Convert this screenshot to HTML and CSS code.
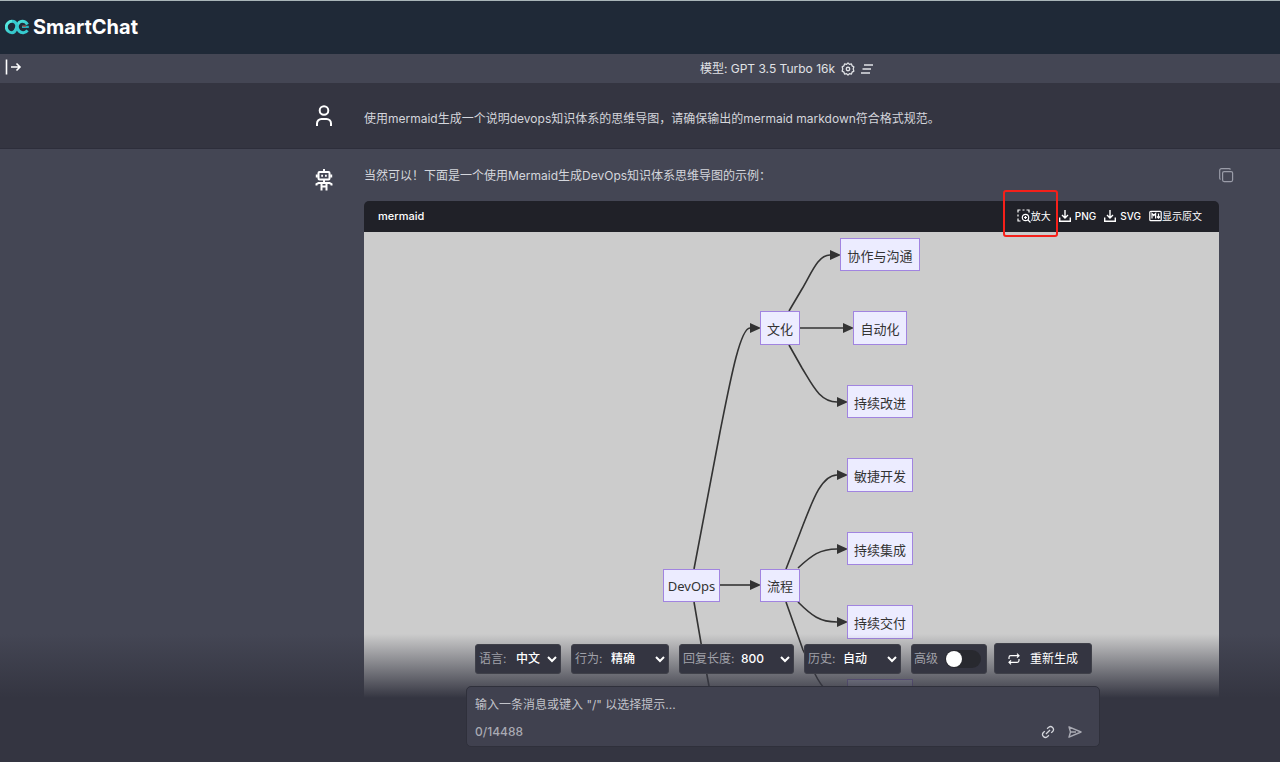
FILE: index.html
```html
<!DOCTYPE html>
<html lang="zh-CN">
<head>
<meta charset="utf-8">
<meta name="viewport" content="width=device-width, initial-scale=1">
<title>SmartChat</title>
<link rel="stylesheet" href="styles.css">
</head>
<body>
<div class="app">
  <header class="brand-bar">
    <svg class="brand-logo" viewBox="0 0 24 16" width="24" height="16" fill="none" aria-hidden="true">
      <defs><linearGradient id="brand" x1="0" y1="0" x2="1" y2="1"><stop offset="0" stop-color="#5cf0e4"/><stop offset="1" stop-color="#22b0bd"/></linearGradient></defs>
      <path d="M22.500 5.500C21.300 3.400 19.300 2.300 17.200 2.300c-4.300 0-4.700 3.900-6 7.200-.9 2.800-2.300 4.200-4.200 4.200a5.700 5.700 0 0 1 0-11.400" stroke="url(#brand)" stroke-width="3"/>
      <path d="M7 2.300c3 0 4.200 1.700 4.800 4.200.5 2.200.9 4.200 2.300 5.600 2.300 2.300 6.400 2.100 8.400-.8" stroke="#36cbd0" stroke-width="3"/>
      <path d="M17 7.900h6.800" stroke="#25aebb" stroke-width="2.200"/>
      <path d="M17.500 7.200h3.500" stroke="#a8504a" stroke-width="1.400"/>
    </svg>
    <h1 class="brand-name">SmartChat</h1>
  </header>

  <div class="model-bar">
    <button class="icon-button expand" aria-label="展开侧栏">
      <svg viewBox="0 0 18 16" width="18" height="16" fill="none" stroke="currentColor" stroke-width="1.600"><path d="M1.500 .5v15M6 8h9M11.500 4.500 15 8l-3.500 3.500"/></svg>
    </button>
    <div class="model-info">
      <span>模型: GPT 3.5 Turbo 16k</span>
      <button class="icon-button" aria-label="设置">
        <svg viewBox="0 0 24 24" width="14" height="14" fill="none" stroke="currentColor" stroke-width="2.200" stroke-linejoin="round"><path d="M12 1.500 14.500 4l3.400-.6 1.100 3.200 3 1.700L21 12l1 3.700-3 1.700-1.100 3.200-3.400-.6L12 22.500 9.500 20l-3.400.6L5 17.400l-3-1.700L3 12 2 8.300l3-1.700 1.100-3.200 3.400.6z"/><circle cx="12" cy="12" r="3"/></svg>
      </button>
      <button class="icon-button" aria-label="菜单">
        <svg viewBox="0 0 12 10" width="12" height="10" fill="none" stroke="currentColor" stroke-width="1.400"><path d="M3 1h9M1.500 5h8.500M0 9h9"/></svg>
      </button>
    </div>
  </div>

  <main class="chat">
    <section class="message message-user">
      <svg class="avatar" viewBox="0 0 18 22" width="18" height="22" fill="none" stroke="currentColor" stroke-width="2"><circle cx="9" cy="5.500" r="4.300"/><path d="M2 21v-2.500a4.500 4.500 0 0 1 4.500-4.500h5a4.500 4.500 0 0 1 4.500 4.500V21"/></svg>
      <p class="message-text">使用mermaid生成一个说明devops知识体系的思维导图，请确保输出的mermaid markdown符合格式规范。</p>
    </section>
    <section class="message message-bot">
      <svg class="avatar" viewBox="0 0 18 22" width="18" height="22" fill="none" stroke="currentColor" stroke-width="2"><path d="M9 0v3"/><rect x="3.500" y="3" width="11" height="7.500" rx="1"/><path d="M1.800 5.500v3M16.200 5.500v3M6.500 14V21.500M11.500 14V21.500M1.500 16.500V15l2-1h11l2 1v1.500M6.500 17.500h5M9 10.500V14"/><path d="M6.200 6.800h1.800M10 6.800h1.800"/></svg>
      <div class="message-body">
        <p class="message-text">当然可以！下面是一个使用Mermaid生成DevOps知识体系思维导图的示例：</p>
        <article class="code-card">
          <div class="code-head">
            <span class="code-lang">mermaid</span>
            <button class="code-action action-zoom">
              <svg viewBox="0 0 14 14" width="14" height="14" fill="none" stroke="currentColor" stroke-width="1.200"><path d="M1 3.500V1h2.500M5.500 1h2M9.500 1H12v2.500M1 5.500v2M1 9.500V12h2.500"/><circle cx="8.500" cy="8.500" r="3.200"/><path d="m11 11 2.500 2.500M7 8.500h3M8.500 7v3"/></svg>
              <span>放大</span><span class="highlight" aria-hidden="true"></span>
            </button>
            <button class="code-action">
              <svg viewBox="0 0 12 12" width="12" height="12" fill="none" stroke="currentColor" stroke-width="1.400"><path d="M6 0v8M3 5l3 3 3-3M.7 7.500v3.800h10.600V7.500"/></svg>
              <span class="latin">PNG</span>
            </button>
            <button class="code-action">
              <svg viewBox="0 0 12 12" width="12" height="12" fill="none" stroke="currentColor" stroke-width="1.400"><path d="M6 0v8M3 5l3 3 3-3M.7 7.500v3.800h10.600V7.500"/></svg>
              <span class="latin">SVG</span>
            </button>
            <button class="code-action">
              <svg viewBox="0 0 13 12" width="13" height="12" fill="none" stroke="currentColor" stroke-width="1.200"><rect x=".8" y="1.300" width="11.400" height="9.400" rx="1"/><path d="M3 8.500v-5l1.800 2 1.800-2v5M9.500 3.500v4.700M8 6.500l1.500 1.700L11 6.500"/></svg>
              <span>显示原文</span>
            </button>
          </div>
          <div class="diagram">
            <svg viewBox="0 0 259 530" width="259" height="530" role="img" aria-label="DevOps">
              <defs><marker id="arrow" viewBox="0 0 10 10" refX="0" refY="5" markerUnits="userSpaceOnUse" markerWidth="11" markerHeight="10" orient="auto" preserveAspectRatio="none"><path class="arrow" d="M0 0 10 5 0 10z"/></marker></defs>
              <g class="edges">
                <path d="M127 79 140 57C150 40 156 23 168 23"/>
                <path d="M138 96H181"/>
                <path d="M127 113 140 136C151 154 158 170 175 170"/>
                <path d="M32 337 58 200C68 150 78 96 88 96"/>
                <path d="M58 353H88"/>
                <path d="M124 337 138 301C150 270 159 243 175 243"/>
                <path d="M136 336C150 323 158 317 175 317"/>
                <path d="M136 370C150 384 158 390 175 390"/>
                <path d="M124 370 141 418 153 442C160 456 168 463 175 463"/>
                <path d="M32 370 39 411 47 454 60 520"/>
              </g>
              <g class="nodes">
                <rect x="178.500" y="6.500" width="79" height="32"/><text x="218" y="29">协作与沟通</text>
                <rect x="191.500" y="79.500" width="53" height="33"/><text x="218" y="102">自动化</text>
                <rect x="185.500" y="153.500" width="65" height="32"/><text x="218" y="176">持续改进</text>
                <rect x="98.500" y="79.500" width="39" height="33"/><text x="118" y="102">文化</text>
                <rect x="185.500" y="226.500" width="65" height="33"/><text x="218" y="249">敏捷开发</text>
                <rect x="185.500" y="300.500" width="65" height="32"/><text x="218" y="323">持续集成</text>
                <rect x="185.500" y="373.500" width="65" height="33"/><text x="218" y="396">持续交付</text>
                <rect x="1.500" y="337.500" width="56" height="32"/><text x="29.500" y="359">DevOps</text>
                <rect x="98.500" y="337.500" width="39" height="32"/><text x="118" y="359">流程</text>
                <rect x="185.500" y="447.500" width="65" height="32"/>
              </g>
            </svg>
          </div>
        </article>
      </div>
      <button class="icon-button copy" aria-label="复制">
        <svg viewBox="0 0 15 15" width="15" height="15" fill="none" stroke="currentColor" stroke-width="1.200"><rect x="3.600" y="3.600" width="10" height="10" rx="1.500"/><path d="M1.500 11.500C.9 11.200.7 10.800.7 10V2.500C.7 1.400 1.400.7 2.500.7H10c.8 0 1.200.2 1.500.8"/></svg>
      </button>
    </section>
  </main>

  <footer class="dock">
    <div class="options">
      <label class="option option-language"><span>语言:</span><select><option>中文</option></select></label>
      <label class="option option-behavior"><span>行为:</span><select><option>精确</option></select></label>
      <label class="option option-length"><span>回复长度:</span><select><option>800</option></select></label>
      <label class="option option-history"><span>历史:</span><select><option>自动</option></select></label>
      <label class="option option-advanced"><span>高级</span><input class="toggle" type="checkbox"></label>
      <button class="regenerate">
        <svg viewBox="0 0 12 12" width="12" height="12" fill="none" stroke="currentColor" stroke-width="1.200"><path d="M1 6V4.500c0-1 .8-1.800 1.800-1.800H11M9 .7l2 2-2 2M11 6v1.500c0 1-.8 1.800-1.800 1.800H1M3 7.300l-2 2 2 2"/></svg>
        重新生成
      </button>
    </div>
    <form class="composer">
      <textarea class="composer-input" rows="1" aria-label="消息" placeholder="输入一条消息或键入 &quot;/&quot; 以选择提示..."></textarea>
      <div class="composer-foot">
        <span class="counter">0/14488</span>
        <button type="button" class="icon-button" aria-label="链接">
          <svg viewBox="0 0 24 24" width="14" height="14" fill="none" stroke="currentColor" stroke-width="2.200"><path d="m8.500 15.500 7-7M10.500 6.500l2.800-2.800a5 5 0 0 1 7 7l-2.800 2.800M13.500 17.500l-2.800 2.800a5 5 0 0 1-7-7l2.800-2.800"/></svg>
        </button>
        <button type="button" class="icon-button send" aria-label="发送">
          <svg viewBox="0 0 14 12" width="14" height="12" fill="none" stroke="currentColor" stroke-width="1.400" stroke-linejoin="round"><path d="M1 .8 13 6 1 11.200 2.500 6zM2.500 6H8"/></svg>
        </button>
      </div>
    </form>
  </footer>
</div>
</body>
</html>
```

FILE: styles.css
```css
* {
  box-sizing: border-box;
}

body {
  margin: 0;
  background: #343541;
  color: #d4d6dc;
  font-family: Inter, "Noto Sans CJK SC", sans-serif;
  font-size: 12px;
  line-height: 20px;
}

button,
select,
textarea {
  margin: 0;
  padding: 0;
  border: 0;
  background: transparent;
  color: inherit;
  font: inherit;
}

svg {
  display: block;
  flex: none;
}

.app {
  position: relative;
  display: flex;
  flex-direction: column;
  height: 100vh;
  overflow: hidden;
}

.brand-bar {
  display: flex;
  flex: none;
  align-items: center;
  gap: 4px;
  height: 54px;
  padding: 0 5px 2px;
  border-top: 1px solid #a9b5b8;
  background: #1f2937;
}

.brand-name {
  margin: 0;
  color: #fff;
  font-size: 20px;
  font-weight: 700;
  line-height: 28px;
}

.icon-button {
  display: flex;
  flex: none;
  align-items: center;
  justify-content: center;
}

.model-bar {
  display: flex;
  flex: none;
  height: 29px;
  padding-left: 5px;
  background: #444654;
}

.expand {
  width: 18px;
  height: 26px;
  color: #fff;
}

.model-info {
  display: flex;
  flex: 1;
  align-items: center;
  justify-content: center;
  gap: 6px;
  padding-left: 270px;
  color: #e0e2e6;
}

.chat {
  display: flex;
  flex: 1;
  flex-direction: column;
  min-height: 0;
  overflow: hidden;
}

.message {
  display: flex;
  flex: none;
  gap: 31px;
  padding: 0 46px 0 315px;
}

.message-user {
  padding-top: 22px;
  padding-bottom: 19px;
  border-bottom: 1px solid #2d2e3b;
}

.message-bot {
  flex: 1;
  padding-top: 17px;
  background: #444654;
}

.avatar {
  color: #fff;
}

.message-bot .avatar {
  margin-top: 3px;
}

.message-text {
  margin: 0;
}

.message-user .message-text {
  padding-top: 4px;
}

.message-body {
  flex: 1;
  min-width: 0;
}

.copy {
  width: 15px;
  height: 18px;
  margin-left: -31px;
  color: #9a9ca8;
}

.code-card {
  margin-top: 15px;
}

.code-head {
  display: flex;
  align-items: center;
  gap: 8px;
  height: 31px;
  padding: 0 17px 1px 14px;
  border-radius: 5px 5px 0 0;
  background: #202128;
  color: #fff;
}

.code-lang {
  flex: 1;
  font-size: 11px;
  font-weight: 500;
}

.code-action {
  position: relative;
  display: flex;
  align-items: center;
  font-size: 10px;
}

.latin {
  padding-left: 4px;
  font-weight: 500;
}

.highlight {
  position: absolute;
  inset: -16px -7px -11px -14px;
  border: 2px solid #f5201a;
  border-radius: 3px;
}

.diagram {
  display: flex;
  justify-content: center;
  background: #ccc;
}

.edges {
  fill: none;
  stroke: #333;
  stroke-width: 1.600;
}

.edges path {
  marker-end: url(#arrow);
}

.arrow {
  fill: #333;
  stroke: none;
}

.nodes rect {
  fill: #ececff;
  stroke: #a184e0;
}

.nodes text {
  fill: #333;
  font-family: "Noto Sans", "Noto Sans CJK SC", sans-serif;
  font-size: 13px;
  text-anchor: middle;
}

.dock {
  position: absolute;
  inset: auto 0 0;
  padding: 9px 180px 15px 466px;
  background: linear-gradient(to bottom, rgb(52 53 65 / 0), #343541 64px);
}

.options {
  display: flex;
  align-items: center;
  gap: 10px;
  margin-bottom: 12px;
  padding-left: 9px;
}

.option {
  display: flex;
  flex: none;
  align-items: center;
  justify-content: space-between;
  height: 30px;
  padding: 0 0 0 3px;
  border: 1px solid #3f4049;
  border-radius: 3px;
  background: #343541;
  color: #a0a1a9;
}

.option select {
  height: 20px;
  color: #fff;
  font-weight: 500;
}

.option-language {
  width: 86px;
}

.option-language select {
  width: 48px;
}

.option-behavior {
  width: 98px;
}

.option-behavior select {
  width: 61px;
}

.option-length {
  width: 115px;
}

.option-length select {
  width: 56px;
}

.option-history {
  width: 97px;
}

.option-history select {
  width: 61px;
}

.option-advanced {
  width: 76px;
  padding: 0 5px 0 2px;
}

.toggle {
  display: flex;
  width: 36px;
  height: 18px;
  margin: 0;
  padding: 1px;
  border-radius: 9px;
  background: #28292f;
  appearance: none;
}

.toggle::before {
  width: 16px;
  height: 16px;
  border-radius: 50%;
  background: #fff;
  content: "";
}

.toggle:checked {
  justify-content: flex-end;
}

.regenerate {
  display: flex;
  flex: none;
  align-items: center;
  justify-content: center;
  gap: 10px;
  width: 98px;
  height: 31px;
  margin-left: -3px;
  border: 1px solid #3f4049;
  border-radius: 3px;
  background: #343541;
  color: #fff;
}

.composer {
  padding: 8px 17px 4px 8px;
  border: 1px solid #2f303b;
  border-radius: 5px;
  background: #40414f;
}

.composer-input {
  display: block;
  width: 100%;
  height: 20px;
  overflow: hidden;
  resize: none;
}

.composer-input::placeholder {
  color: #c2c3ca;
}

.composer-foot {
  display: flex;
  align-items: center;
  gap: 13px;
  padding-top: 7px;
}

.counter {
  flex: 1;
  color: #a9aab3;
  font-weight: 500;
}

.send {
  color: #a9aab3;
}
```
